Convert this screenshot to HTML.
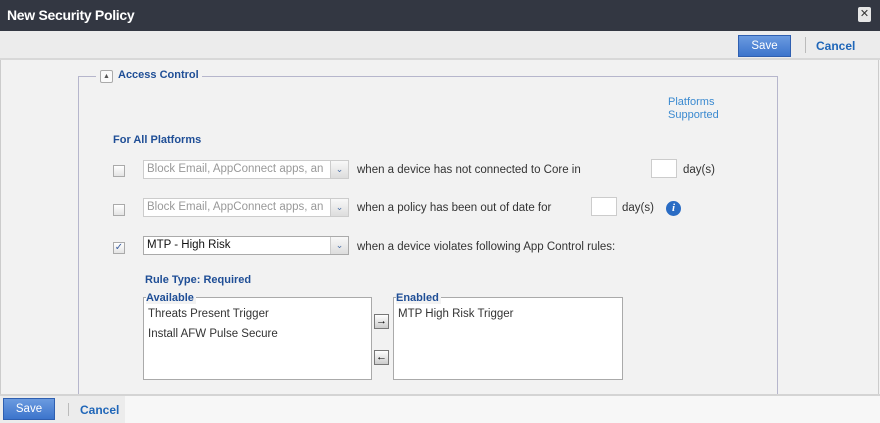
<!DOCTYPE html>
<html><head><style>
*{margin:0;padding:0;box-sizing:border-box}
body{width:880px;height:423px;overflow:hidden;background:#f2f2f2;font-family:"Liberation Sans",sans-serif;font-size:11px;color:#333;position:relative}
.a{position:absolute;white-space:nowrap}
.blue{color:#1f4e96;font-weight:bold}
.cb{position:absolute;width:12px;height:12px;border:1px solid #aaa;background:linear-gradient(#fff,#e4e4e4)}
.sel{position:absolute;height:19px;border:1px solid #ccc;background:#fff;padding:2px 3px;color:#999;font-size:11.5px}
.sel .ar{position:absolute;right:0;top:0;width:18px;height:17px;border-left:1px solid #ccc;background:linear-gradient(#f8f8f8,#ddd);color:#4a6fa8;font-size:9px;text-align:center;line-height:17px}
.inp{position:absolute;width:26px;height:19px;border:1px solid #ccc;background:#fff}
.box{position:absolute;border:1px solid #aaa;background:#fff}
.box .hd{position:absolute;top:-6px;left:2px;background:#f2f2f2;padding-right:2px;color:#1f4e96;font-weight:bold}
.box div.i{position:absolute;left:4px;font-size:11.5px;color:#333}
.btn{position:absolute;background:linear-gradient(#6b9be0,#3c74cc);border:1px solid #2f5fb0;color:#fff;text-align:center;font-size:11.5px}
.ab{position:absolute;width:15px;height:15px;border:1px solid #777;background:linear-gradient(#fff,#ccc);font-size:11px;font-weight:bold;text-align:center;line-height:13px;color:#000}
</style></head><body>
<div class="a" style="left:0;top:0;width:880px;height:31px;background:#333742"></div>
<div class="a" style="left:7px;top:7px;color:#fff;font-weight:bold;font-size:14px;letter-spacing:-0.3px">New Security Policy</div>
<div class="a" style="left:858px;top:7px;width:13px;height:15px;background:#e6e6e6;border-radius:2px;color:#333;font-size:11px;text-align:center;line-height:15px">✕</div>
<div class="a" style="left:0;top:31px;width:880px;height:29px;background:#ececec;border-bottom:2px solid #d8d8d8"></div>
<div class="btn" style="left:738px;top:35px;width:53px;height:22px;line-height:20px">Save</div>
<div class="a" style="left:805px;top:37px;width:1px;height:16px;background:#bbb"></div>
<div class="a blue" style="left:816px;top:39px;color:#1f66b8;font-size:12px">Cancel</div>
<div class="a" style="left:0;top:60px;width:1px;height:336px;background:#ccc"></div>
<div class="a" style="left:878px;top:60px;width:1px;height:336px;background:#ccc"></div>
<div class="a" style="left:78px;top:76px;width:700px;height:330px;border:1px solid #b6b6cc;border-bottom:none"></div>
<div class="a" style="left:96px;top:69px;width:106px;height:14px;background:#f2f2f2"></div>
<div class="a" style="left:100px;top:70px;width:13px;height:13px;border:1px solid #aaa;border-radius:2px;background:#fafafa;font-size:7px;text-align:center;line-height:11px;color:#555">▲</div>
<div class="a blue" style="left:118px;top:69px">Access Control</div>
<div class="a" style="left:668px;top:96px;color:#3b8ad0;line-height:13px">Platforms<br>Supported</div>
<div class="a blue" style="left:113px;top:134px">For All Platforms</div>

<div class="cb" style="left:113px;top:165px"></div>
<div class="sel" style="left:143px;top:160px;width:206px">Block Email, AppConnect apps, an<div class="ar">⌄</div></div>
<div class="a" style="left:357px;top:164px;font-size:11.5px">when a device has not connected to Core in</div>
<div class="inp" style="left:651px;top:159px"></div>
<div class="a" style="left:683px;top:164px;font-size:11.5px">day(s)</div>

<div class="cb" style="left:113px;top:204px"></div>
<div class="sel" style="left:143px;top:198px;width:206px">Block Email, AppConnect apps, an<div class="ar">⌄</div></div>
<div class="a" style="left:357px;top:202px;font-size:11.5px">when a policy has been out of date for</div>
<div class="inp" style="left:591px;top:197px"></div>
<div class="a" style="left:622px;top:202px;font-size:11.5px">day(s)</div>
<div class="a" style="left:666px;top:201px;width:15px;height:15px;border-radius:50%;background:#2a6cc4;color:#fff;font:italic bold 11px 'Liberation Serif',serif;text-align:center;line-height:15px">i</div>

<div class="cb" style="left:113px;top:242px;color:#3a5ea0;font-size:10px;line-height:10px;text-align:center">✓</div>
<div class="sel" style="left:143px;top:236px;width:206px;color:#111;border-color:#aaa">MTP - High Risk<div class="ar">⌄</div></div>
<div class="a" style="left:357px;top:241px;font-size:11.5px">when a device violates following App Control rules:</div>

<div class="a blue" style="left:145px;top:274px">Rule Type: Required</div>
<div class="box" style="left:143px;top:297px;height:83px;width:229px"><span class="hd">Available</span>
<div class="i" style="top:10px">Threats Present Trigger</div><div class="i" style="top:30px">Install AFW Pulse Secure</div></div>
<div class="ab" style="left:374px;top:314px">→</div>
<div class="ab" style="left:374px;top:350px">←</div>
<div class="box" style="left:393px;top:297px;width:230px;height:83px"><span class="hd">Enabled</span>
<div class="i" style="top:10px">MTP High Risk Trigger</div></div>

<div class="a" style="left:0;top:394px;width:880px;height:2px;background:#d4d4d4"></div>
<div class="a" style="left:0;top:396px;width:880px;height:27px;background:#f7f7f7"></div>
<div class="a" style="left:0;top:396px;width:125px;height:27px;background:#ececec"></div>
<div class="btn" style="left:3px;top:398px;width:52px;height:22px;line-height:20px">Save</div>
<div class="a" style="left:68px;top:403px;width:1px;height:13px;background:#bbb"></div>
<div class="a blue" style="left:80px;top:403px;color:#1f66b8;font-size:12px">Cancel</div>
</body></html>
